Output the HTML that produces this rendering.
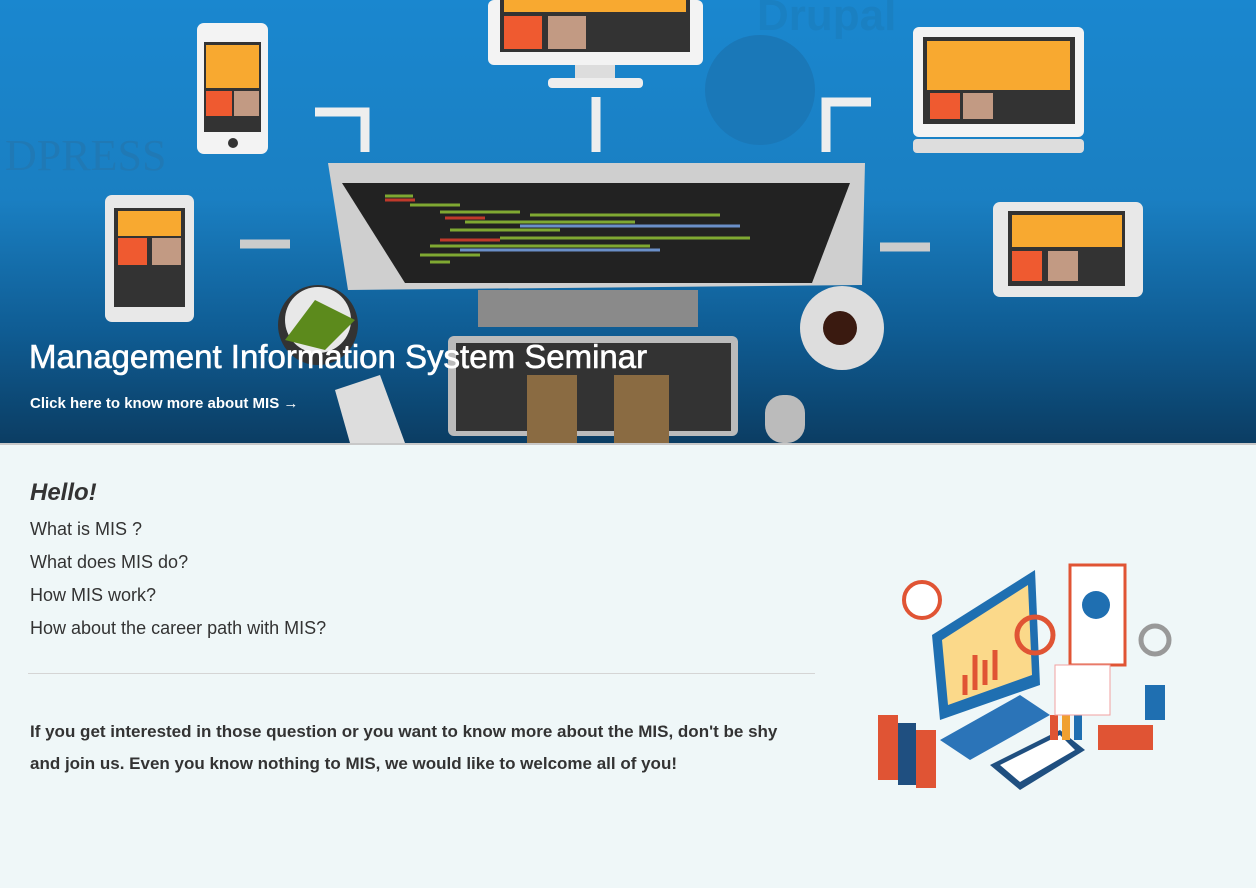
<!DOCTYPE html>
<html><head><style>
body{margin:0;width:1256px;height:888px;overflow:hidden;background:#eff7f8;font-family:"Liberation Sans",sans-serif;}
.hero{position:absolute;left:0;top:0;width:1256px;height:443px;background:linear-gradient(#1a87cf 0%,#1a7fc2 45%,#0f5c93 75%,#0b3d63 100%);overflow:hidden;}
.line{position:absolute;left:0;top:443px;width:1256px;height:2px;background:#c8c8c8;}
h1{position:absolute;left:29px;top:338px;margin:0;font-size:33px;color:#fff;font-weight:normal;-webkit-text-stroke:0.6px #fff;}
.link{position:absolute;left:30px;top:395px;font-size:15px;color:#fff;font-weight:bold;}
.c{position:absolute;left:30px;color:#333;}
</style></head><body>
<div class="hero">
<svg width="1256" height="443">
<rect x="197" y="23" width="71" height="131" rx="7" fill="#f3f3f3"/><rect x="204" y="42" width="57" height="90" fill="#333"/><rect x="206" y="45" width="53" height="43" fill="#f8a930"/><rect x="206" y="91" width="26" height="25" fill="#ef5a30"/><rect x="234" y="91" width="25" height="25" fill="#c29a83"/><circle cx="233" cy="143" r="5" fill="#333"/>
<rect x="488" y="0" width="215" height="65" rx="6" fill="#f3f3f3"/><rect x="500" y="0" width="190" height="52" fill="#333"/><rect x="504" y="0" width="182" height="12" fill="#f8a930"/><rect x="504" y="16" width="38" height="33" fill="#ef5a30"/><rect x="548" y="16" width="38" height="33" fill="#c29a83"/><rect x="575" y="65" width="40" height="15" fill="#ddd"/><rect x="548" y="78" width="95" height="10" rx="4" fill="#eee"/>
<rect x="913" y="27" width="171" height="110" rx="6" fill="#f3f3f3"/><rect x="923" y="37" width="152" height="87" fill="#333"/><rect x="927" y="41" width="143" height="49" fill="#f8a930"/><rect x="930" y="93" width="30" height="26" fill="#ef5a30"/><rect x="963" y="93" width="30" height="26" fill="#c29a83"/><rect x="913" y="139" width="171" height="14" rx="4" fill="#ddd"/>
<rect x="105" y="195" width="89" height="127" rx="7" fill="#e8e8e8"/><rect x="114" y="208" width="71" height="99" fill="#333"/><rect x="118" y="211" width="63" height="25" fill="#f8a930"/><rect x="118" y="238" width="29" height="27" fill="#ef5a30"/><rect x="152" y="238" width="29" height="27" fill="#c29a83"/>
<rect x="993" y="202" width="150" height="95" rx="7" fill="#e8e8e8"/><rect x="1008" y="211" width="117" height="75" fill="#333"/><rect x="1012" y="215" width="110" height="32" fill="#f8a930"/><rect x="1012" y="251" width="30" height="30" fill="#ef5a30"/><rect x="1048" y="251" width="30" height="30" fill="#c29a83"/>
<path d="M315 112h50v40" stroke="#eee" stroke-width="9" fill="none"/><path d="M596 152v-55" stroke="#eee" stroke-width="9"/><path d="M826 152v-50h45" stroke="#eee" stroke-width="9" fill="none"/><path d="M290 244h-50" stroke="#ccc" stroke-width="9"/><path d="M880 247h50" stroke="#ccc" stroke-width="9"/>
<polygon points="328,163 865,163 862,285 348,290" fill="#cfcfcf"/><polygon points="342,183 850,183 812,283 405,283" fill="#222"/>
<g stroke-width="3"><path d="M385 196h28M410 205h50M440 212h80M530 215h190M465 222h170M450 230h110M500 238h250M430 246h80M490 246h160M420 255h60M430 262h20" stroke="#7fa832"/><path d="M385 200h30M445 218h40M440 240h60" stroke="#c0392b"/><path d="M520 226h220M460 250h200" stroke="#6a8fc8"/></g>
<rect x="478" y="290" width="220" height="37" fill="#8a8a8a"/>
<rect x="448" y="336" width="290" height="100" rx="6" fill="#bbb"/><rect x="456" y="343" width="275" height="88" fill="#333"/>
<rect x="527" y="375" width="50" height="68" fill="#8a6b42"/><rect x="614" y="375" width="55" height="68" fill="#8a6b42"/>
<circle cx="318" cy="325" r="40" fill="#333"/><circle cx="318" cy="320" r="33" fill="#e8e8e8"/><path d="M285 340l30-40 40 20-30 30z" fill="#5c8a1c"/>
<circle cx="842" cy="328" r="42" fill="#ddd"/><circle cx="840" cy="328" r="17" fill="#3a1a10"/>
<polygon points="335,390 380,375 405,443 350,443" fill="#ddd"/>
<rect x="765" y="395" width="40" height="48" rx="18" fill="#bbb"/>
<text x="5" y="170" font-size="44" fill="#2079b5" font-family="Liberation Serif">DPRESS</text>
<text x="757" y="30" font-size="44" fill="#1a80c2" font-weight="bold">Drupal</text>
<circle cx="760" cy="90" r="55" fill="#1a78b8"/>
</svg>
</div>
<div class="line"></div>
<h1>Management Information System Seminar</h1>
<div class="link">Click here to know more about MIS →</div>
<div class="c" style="top:479px;font-size:24px;font-weight:bold;font-style:italic;">Hello!</div>
<div class="c" style="top:519px;font-size:18px;">What is MIS ?</div>
<div class="c" style="top:552px;font-size:18px;">What does MIS do?</div>
<div class="c" style="top:585px;font-size:18px;">How MIS work?</div>
<div class="c" style="top:618px;font-size:18px;">How about the career path with MIS?</div>
<div style="position:absolute;left:28px;top:673px;width:787px;height:1px;background:#d5d5d5;"></div>
<div class="c" style="top:716px;font-size:17px;font-weight:bold;line-height:32px;width:780px;">If you get interested in those question or you want to know more about the MIS, don't be shy and join us. Even you know nothing to MIS, we would like to welcome all of you!</div>
<svg style="position:absolute;left:870px;top:545px" width="320" height="255">
<circle cx="52" cy="55" r="18" fill="#fff" stroke="#e05434" stroke-width="4"/>
<polygon points="62,90 165,25 170,140 70,175" fill="#1f6fb1"/><polygon points="72,95 158,40 162,130 78,160" fill="#fbd98a"/>
<path d="M95 150v-20M105 145v-35M115 140v-25M125 135v-30" stroke="#e05434" stroke-width="5"/>
<rect x="200" y="20" width="55" height="100" fill="#fff" stroke="#e05434" stroke-width="3"/><circle cx="226" cy="60" r="14" fill="#1f6fb1"/>
<circle cx="165" cy="90" r="18" fill="none" stroke="#e05434" stroke-width="5"/>
<polygon points="70,195 150,150 180,170 100,215" fill="#2b74b8"/>
<polygon points="120,220 190,185 215,205 150,245" fill="#1f4f80"/><polygon points="130,220 190,190 205,205 150,237" fill="#fff"/>
<rect x="8" y="170" width="20" height="65" fill="#e05434"/><rect x="28" y="178" width="18" height="62" fill="#1f4f80"/><rect x="46" y="185" width="20" height="58" fill="#e05434"/>
<rect x="180" y="170" width="8" height="25" fill="#e05434"/><rect x="192" y="160" width="8" height="35" fill="#f0a030"/><rect x="204" y="165" width="8" height="30" fill="#1f6fb1"/>
<rect x="228" y="180" width="55" height="25" fill="#e05434"/><rect x="275" y="140" width="20" height="35" fill="#1f6fb1"/>
<circle cx="285" cy="95" r="14" fill="none" stroke="#999" stroke-width="5"/>
<rect x="185" y="120" width="55" height="50" fill="#fff" stroke="#f0a0a0"/>
</svg>
</body></html>
